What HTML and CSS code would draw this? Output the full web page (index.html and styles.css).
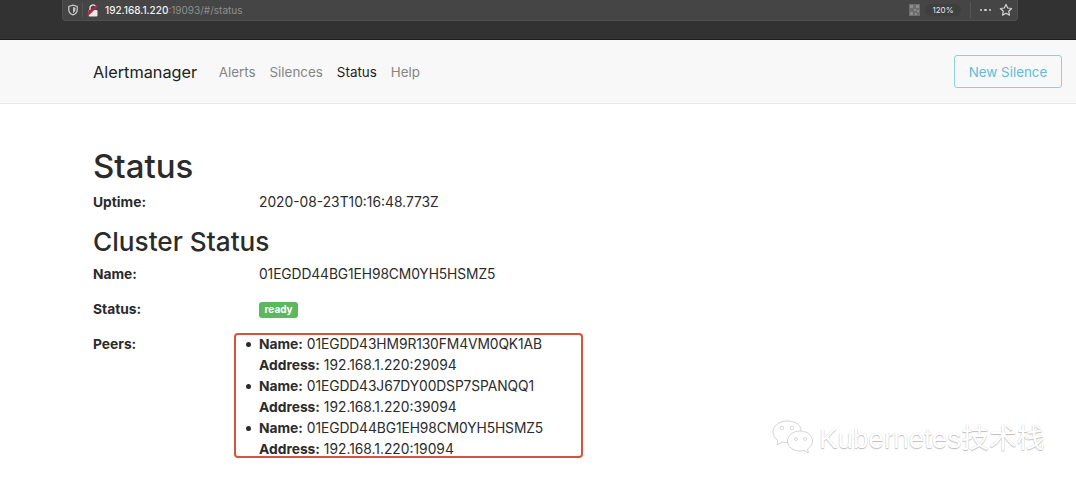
FILE: index.html
```html
<!DOCTYPE html>
<html lang="en">
<head>
<meta charset="utf-8">
<title>Alertmanager</title>
<link rel="stylesheet" href="styles.css">
</head>
<body>
<div class="chrome">
  <div class="urlbar">
    <svg class="shield" width="12" height="12" viewBox="0 0 12 12"><path d="M6 1.200 10.200 2.400V6C10.200 8.400 8.200 10 6 10.900 3.800 10 1.800 8.400 1.800 6V2.400Z" fill="none" stroke="#c4c4c4" stroke-width="1.300"/><path d="M6 3 8.400 3.700V6C8.400 7.400 7.200 8.400 6 9Z" fill="#c4c4c4"/></svg>
    <span class="sep"></span>
    <svg class="lock" width="12" height="13" viewBox="0 0 12 13"><path d="M3 6V4a3 3 0 0 1 5.600-1.500" fill="none" stroke="#e8e8e8" stroke-width="1.300"/><rect x="1.500" y="6" width="9" height="6.500" rx="1" fill="#e8e8e8"/><path d="M.5 11 10.500 1.500" stroke="#b5243f" stroke-width="2.200"/><path d="M1.500 6H5L1.500 9.500Z" fill="#b5243f"/></svg>
    <span class="url"><span class="host">192.168.1.220</span>:19093/#/status</span>
    <span class="spring"></span>
    <svg class="qr" width="11" height="12" viewBox="0 0 11 12"><rect width="11" height="12" fill="#6d6d6d"/><path d="M1 1h3v3H1zM7 1h3v3H7zM1 8h3v3H1zM5 5h2v2H5zM8 6h2v2H8zM6 9h2v2H6z" fill="#8c8c8c"/></svg>
    <span class="zoom">120%</span>
    <span class="sep sep-right"></span>
    <span class="dots"><i></i><i></i><i></i></span>
    <svg class="star" width="14" height="14" viewBox="0 0 14 14"><path d="M7 1.400 8.700 5 12.600 5.500 9.700 8.200 10.500 12.100 7 10.200 3.500 12.100 4.300 8.200 1.400 5.500 5.300 5Z" fill="none" stroke="#d2d2d2" stroke-width="1.200" stroke-linejoin="round"/></svg>
  </div>
</div>
<nav class="navbar">
  <a class="brand">Alertmanager</a>
  <ul class="nav">
    <li>Alerts</li>
    <li>Silences</li>
    <li class="active">Status</li>
    <li>Help</li>
  </ul>
  <button class="btn">New Silence</button>
</nav>
<main class="content">
  <h1>Status</h1>
  <div class="row row-uptime"><b>Uptime:</b><span>2020-08-23T10:16:48.773Z</span></div>
  <h2>Cluster Status</h2>
  <div class="row row-name"><b>Name:</b><span class="id">01EGDD44BG1EH98CM0YH5HSMZ5</span></div>
  <div class="row row-status"><b>Status:</b><span class="badge">ready</span></div>
  <div class="row row-peers"><b>Peers:</b>
    <ul class="peers">
      <li><b>Name:</b> <span class="id">01EGDD43HM9R130FM4VM0QK1AB</span><br><b>Address:</b> 192.168.1.220:29094</li>
      <li><b>Name:</b> <span class="id">01EGDD43J67DY00DSP7SPANQQ1</span><br><b>Address:</b> 192.168.1.220:39094</li>
      <li><b>Name:</b> <span class="id">01EGDD44BG1EH98CM0YH5HSMZ5</span><br><b>Address:</b> 192.168.1.220:19094</li>
    </ul>
  </div>
</main>
<div class="highlight"></div>
<div class="watermark">
  <svg width="44" height="34" viewBox="0 0 44 34"><g fill="#fff" stroke="#d4d4d4" stroke-width="1"><path d="M16 2C8 2 2 7 2 13c0 3.500 2 6.500 5 8.500L6 26l5-3c1.500.4 3 .6 5 .6 8 0 14-5 14-11.600S24 2 16 2Z"/><path d="M29 12c-7 0-12.500 4.500-12.500 10S22 32 29 32c1.500 0 3-.2 4-.6l4.500 2.600-1-4c3-2 5-4.500 5-8 0-5.500-5.500-10-12.500-10Z"/></g><g fill="#fff" stroke="#cfcfcf" stroke-width=".8"><circle cx="11" cy="9" r="1.800"/><circle cx="21" cy="9" r="1.800"/><circle cx="25" cy="20" r="1.500"/><circle cx="34" cy="20" r="1.500"/></g></svg>
  <span>Kubernetes技术栈</span>
</div>
</body>
</html>
```
FILE: styles.css
```css
* { box-sizing: border-box; }
html, body { margin: 0; padding: 0; }
body {
  width: 1076px;
  height: 480px;
  overflow: hidden;
  position: relative;
  background: #fff;
  color: #2b2b2b;
  font-family: Inter, "Liberation Sans", "Noto Sans CJK SC", sans-serif;
  font-size: 13.800px;
}
.chrome {
  height: 40px;
  background: #323232;
  border-bottom: 1px solid #1d1d1d;
  padding: 0 58px 0 62px;
}
.urlbar {
  height: 21px;
  background: #454545;
  border: 1px solid #505050;
  border-top: 0;
  border-radius: 0 0 4px 4px;
  display: flex;
  align-items: center;
  padding: 0 4px 0 4px;
  color: #fff;
}
.shield { margin-right: 3px; }
.sep { width: 1px; height: 14px; background: #565656; margin-right: 4px; }
.lock { margin-right: 6px; }
.url { font-size: 10px; color: #8f8f8f; }
.host { color: #f2f2f2; font-weight: 500; }
.spring { flex: 1; }
.qr { margin-right: 5px; }
.zoom {
  font-size: 8px;
  color: #e4e4e4;
  background: #3f3f3f;
  border-radius: 6px;
  padding: 1px 7px;
  margin-right: 9px;
}
.sep-right { height: 16px; margin-right: 9px; }
.dots { display: flex; gap: 2px; margin-right: 8px; }
.dots i { width: 2.500px; height: 2.500px; border-radius: 50%; background: #d2d2d2; }
.navbar {
  height: 64px;
  background: #f8f8f8;
  border-bottom: 1px solid #e7e7e7;
  display: flex;
  align-items: center;
  padding: 0 14px 0 93px;
}
.brand { font-size: 16.300px; color: #222; margin-right: 21.500px; }
.nav { display: flex; gap: 14px; list-style: none; margin: 0; padding: 0; flex: 1; color: #858585; font-size: 13.400px; }
.nav .active { color: #222; }
.btn {
  width: 108px;
  height: 33px;
  background: transparent;
  border: 1px solid #8fcfdf;
  border-radius: 3px;
  color: #62bcd6;
  font: inherit;
  font-size: 13.400px;
  padding: 0;
}
.content { padding: 0 0 0 93px; }
h1 { font-weight: 500; font-size: 33px; line-height: 40px; margin: 42px 0 0; color: #2b2b2b; }
h2 { font-weight: 500; font-size: 26.200px; line-height: 32px; margin: 13px 0 0; color: #2b2b2b; }
.row { display: flex; line-height: 21px; }
.row > b { width: 166px; flex: none; font-weight: 700; }
.id { letter-spacing: -.09px; }
.row-uptime { margin-top: 6px; }
.row-name { margin-top: 6px; }
.row-status { margin-top: 14px; }
.row-peers { margin-top: 14px; }
.badge {
  background: #5cb85c;
  color: #fff;
  font-size: 10px;
  font-weight: 700;
  line-height: 15px;
  height: 16px;
  padding: 0 5.500px;
  border-radius: 3px;
  margin-top: 3px;
}
.peers { margin: 0; padding: 0; list-style: none; }
.peers li { position: relative; }
.peers li::before {
  content: "";
  position: absolute;
  left: -13px;
  top: 8px;
  width: 5px;
  height: 5px;
  border-radius: 50%;
  background: #2b2b2b;
}
.peers b { font-weight: 700; }
.highlight {
  position: absolute;
  left: 234px;
  top: 333px;
  width: 349px;
  height: 125px;
  border: 2px solid #d8533c;
  border-radius: 4px;
}
.watermark {
  position: absolute;
  left: 771px;
  top: 416px;
  display: flex;
  align-items: center;
  gap: 4px;
  color: #fff;
  font-size: 27.800px;
  font-weight: 400;
  text-shadow: 0 1px 1px #bdbdbd, 0 0 1px #cfcfcf;
  font-family: "Liberation Sans", "Noto Sans CJK SC", sans-serif;
}
```
